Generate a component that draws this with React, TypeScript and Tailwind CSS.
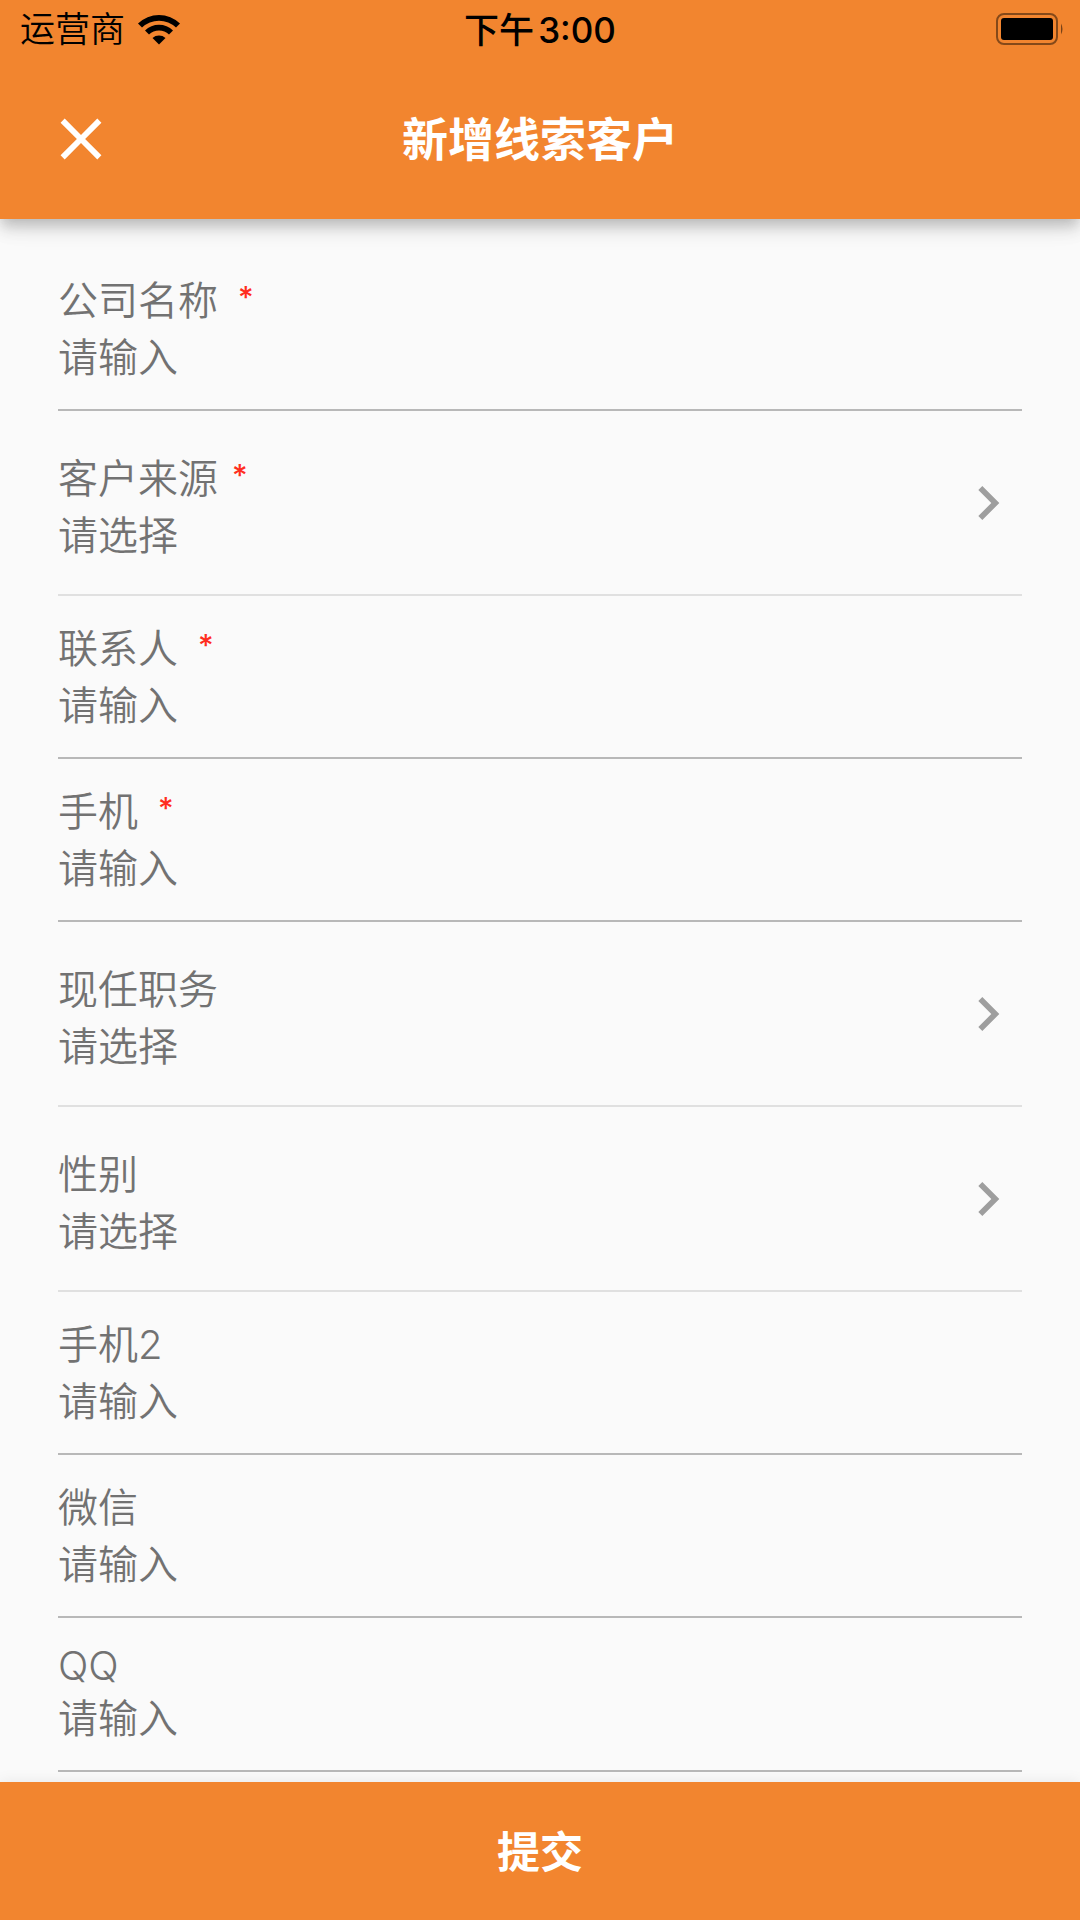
import { useId } from 'react';
import { MdChevronRight, MdClose } from 'react-icons/md';

interface Field {
  label: string;
  kind: 'input' | 'select';
  required?: boolean;
}

const FIELDS: Field[] = [
  { label: '公司名称', kind: 'input', required: true },
  { label: '客户来源', kind: 'select', required: true },
  { label: '联系人', kind: 'input', required: true },
  { label: '手机', kind: 'input', required: true },
  { label: '现任职务', kind: 'select' },
  { label: '性别', kind: 'select' },
  { label: '手机2', kind: 'input' },
  { label: '微信', kind: 'input' },
  { label: 'QQ', kind: 'input' },
];

function WifiIcon() {
  return (
    <svg width="44" height="32" viewBox="0 0 44 32" aria-hidden="true">
      <path d="M1 10.5 A30 30 0 0 1 43 10.5 L39 14.5 A24.5 24.5 0 0 0 5 14.5 Z" />
      <path d="M8 17.5 A20 20 0 0 1 36 17.5 L32 21.5 A14.5 14.5 0 0 0 12 21.5 Z" />
      <path d="M15.5 25 A10 10 0 0 1 28.5 25 L22 31.5 Z" />
    </svg>
  );
}

function BatteryIcon() {
  return (
    <svg width="70" height="34" viewBox="0 0 70 34" aria-hidden="true">
      <rect x="3" y="2" width="60" height="30" rx="7" fill="none" stroke="#000" strokeOpacity="0.45" strokeWidth="2" />
      <rect x="7" y="6" width="52" height="22" rx="3" />
      <path d="M67 11.5 Q70 17 67 22.5 Z" fillOpacity="0.5" />
    </svg>
  );
}

function StatusBar() {
  return (
    <div className="grid grid-cols-3 items-center h-[58px] px-4 text-black text-[35px] leading-none">
      <div className="flex items-center gap-3 pl-1">
        <span className="font-[350]">运营商</span>
        <WifiIcon />
      </div>
      <div className="flex justify-center gap-1 pt-[2px] font-medium">
        <span>下午</span>
        <span>3:00</span>
      </div>
      <div className="flex justify-end"><BatteryIcon /></div>
    </div>
  );
}

function FieldRow({ label, kind, required }: Field) {
  const id = useId();
  const isSelect = kind === 'select';
  // latin-only labels sit on a shorter line than chinese ones
  const latin = /^[\x00-\x7f]+$/.test(label);
  return (
    <div className={`flex items-center border-b-2 ${isSelect ? 'border-[#e0e0e0]' : 'border-[#b8b8b8]'}`}>
      <div className={`flex flex-col flex-1 min-w-0 ${isSelect ? 'pt-[39px] pb-[30px]' : 'pt-6 pb-[23px]'}`}>
        <label htmlFor={id} className={`flex items-center ${latin ? 'h-12' : 'h-[57px]'} ${isSelect ? 'gap-[14px]' : 'gap-5'}`}>
          <span>{label}</span>
          {required && <span className="pb-2 text-[#ff2d20] text-[30px] font-medium">*</span>}
        </label>
        {isSelect ? (
          <select id={id} className="h-[57px] w-full appearance-none bg-transparent focus:outline-none">
            <option>请选择</option>
          </select>
        ) : (
          <input
            id={id}
            type="text"
            placeholder="请输入"
            className="h-[57px] w-full bg-transparent placeholder:text-[#727272] focus:outline-none" />
        )}
      </div>
      {isSelect && <MdChevronRight className="shrink-0 size-[68px] text-[#9e9e9e]" />}
    </div>
  );
}

export default function App() {
  return (
    <div className="flex flex-col h-screen bg-[#fafafa] font-['Inter','Noto_Sans_CJK_SC',sans-serif]">
      <header className="relative z-10 bg-[#f2852f] shadow-[0_6px_12px_-3px_rgba(0,0,0,0.16),0_12px_14px_0_rgba(0,0,0,0.1),0_3px_29px_0_rgba(0,0,0,0.08)]">
        <StatusBar />
        <div className="grid grid-cols-[80px_1fr_80px] items-center h-[161px] px-[46px] text-white">
          <button aria-label="关闭"><MdClose className="size-[70px]" /></button>
          <h1 className="pt-[2px] text-center text-[46px] font-bold">新增线索客户</h1>
        </div>
      </header>
      <form id="lead" className="flex-1 min-h-0 overflow-y-auto px-[58px] pt-[29px] text-[40px] leading-none font-[350] text-[#727272]">
        {FIELDS.map(field => <FieldRow key={field.label} {...field} />)}
      </form>
      <button
        type="submit"
        form="lead"
        className="relative h-[138px] shrink-0 bg-[#f2852f] pt-[2px] text-white text-[43px] font-bold shadow-[0_0_14px_rgba(0,0,0,0.08)]">
        提交
      </button>
    </div>
  );
}
